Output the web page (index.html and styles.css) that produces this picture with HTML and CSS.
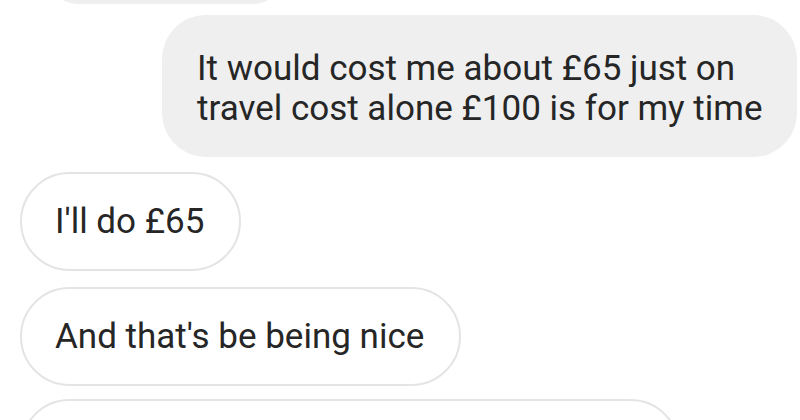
FILE: index.html
```html
<!DOCTYPE html>
<html lang="en">
<head>
<meta charset="utf-8">
<title>Chat</title>
<link rel="stylesheet" href="styles.css">
</head>
<body>
<div class="chat">
  <div class="bubble prev"></div>
  <div class="bubble sent">
    <p>It would cost me about £65 just on<br>travel cost alone £100 is for my time</p>
  </div>
  <div class="bubble recv"><p>I'll do £65</p></div>
  <div class="bubble recv"><p>And that's be being nice</p></div>
  <div class="bubble recv last"><p>&nbsp;</p></div>
</div>
</body>
</html>
```
FILE: styles.css
```css
html, body {
  margin: 0;
  padding: 0;
  background: #ffffff;
  overflow: hidden;
}
.chat {
  display: flex;
  flex-direction: column;
  align-items: flex-start;
  margin-top: -60px;
  font-family: Roboto, "Liberation Sans", sans-serif;
  font-size: 35px;
  line-height: 40px;
  color: #262626;
}
.bubble p {
  margin: 0;
  white-space: nowrap;
}
.prev {
  margin-left: 48px;
  width: 235px;
  height: 64px;
  background: #efefef;
  border-radius: 30px;
}
.sent {
  margin-top: 11px;
  margin-left: 162px;
  width: 635px;
  box-sizing: border-box;
  padding: 34px 0 28px 35px;
  background: #efefef;
  border-radius: 44px;
  letter-spacing: 0;
}
.recv {
  margin-left: 20px;
  box-sizing: border-box;
  height: 99px;
  display: flex;
  align-items: center;
  padding: 0 35px 0 33px;
  border: 2px solid #e4e4e4;
  border-radius: 50px;
  background: #fff;
  letter-spacing: 0;
}
.sent + .recv { margin-top: 15px; }
.recv + .recv { margin-top: 16px; }
.recv.last {
  margin-top: 13px;
  width: 660px;
}
```
